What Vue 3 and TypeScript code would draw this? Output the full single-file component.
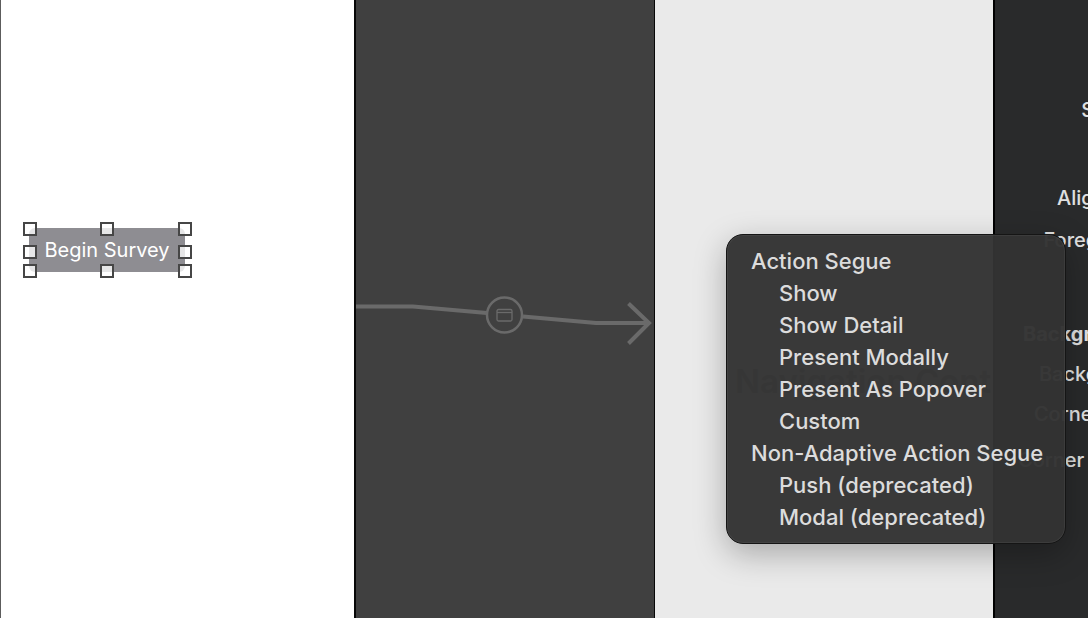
<script setup lang="ts">
interface MenuGroup {
  title: string
  items: string[]
}

const groups: MenuGroup[] = [
  {
    title: 'Action Segue',
    items: ['Show', 'Show Detail', 'Present Modally', 'Present As Popover', 'Custom'],
  },
  {
    title: 'Non-Adaptive Action Segue',
    items: ['Push (deprecated)', 'Modal (deprecated)'],
  },
]

const handles: string[] = [
  'top left', 'top center', 'top right',
  'middle left', 'middle right',
  'bottom left', 'bottom center', 'bottom right',
]
</script>

<template>
  <main class="editor">
    <section class="scene">
      <div class="selection">
        <button class="survey" type="button">Begin Survey</button>
        <i v-for="handle in handles" :key="handle" class="handle" :class="handle"></i>
      </div>
    </section>

    <section class="gap">
      <svg class="segue" viewBox="0 0 298 44" fill="none" stroke="#6a6a6a" aria-hidden="true">
        <path d="M0 4.500H57L131 11M167 14.500L240 21H293" stroke-width="4" />
        <path d="M272.500 1.500L293 21L272.500 41.500" stroke-width="4" />
        <circle cx="148.500" cy="13" r="17.500" stroke-width="2.500" />
        <rect x="141" y="7.500" width="15" height="11.500" rx="1.500" stroke-width="1.300" />
        <path d="M141 10.500H156" stroke-width="1.300" />
      </svg>
    </section>

    <section class="controller">
      <h1 class="controller-title">Navigation Controller</h1>
    </section>

    <aside class="inspector">
      <div class="labels">
        <span class="label subtitle">Subtitle</span>
        <span class="label">Alignment</span>
        <span class="label foreground">Foreground</span>
        <h2 class="heading">Background</h2>
        <span class="label">Background</span>
        <span class="label">Corner Style</span>
        <span class="label radius">Corner Radius</span>
      </div>
    </aside>

    <div class="menu" role="menu">
      <div v-for="group in groups" :key="group.title" role="group" :aria-label="group.title">
        <div class="group-title">{{ group.title }}</div>
        <button v-for="item in group.items" :key="item" class="item" type="button" role="menuitem">
          {{ item }}
        </button>
      </div>
    </div>
  </main>
</template>

<style>
body {
  margin: 0;
  background: #404040;
}
</style>

<style scoped>
.editor {
  position: relative;
  display: grid;
  grid-template-columns: 356fr 299fr 338fr 95fr;
  min-height: 100vh;
  overflow: hidden;
  font-family: Inter, "Liberation Sans", sans-serif;
}

.editor *,
.editor {
  box-sizing: border-box;
}

.scene {
  position: relative;
  background: #fff;
  border-left: 1px solid #5c5c5c;
  border-right: 2px solid #080808;
}

.selection {
  position: absolute;
  top: 228px;
  left: 28px;
}

.survey {
  display: block;
  width: 156px;
  height: 44px;
  padding: 0;
  border: 0;
  border-radius: 6px;
  background: #8e8d92;
  color: #fff;
  font: 400 20px/44px Inter, "Liberation Sans", sans-serif;
  white-space: nowrap;
}

.handle {
  position: absolute;
  width: 14px;
  height: 14px;
  border: 2px solid #464646;
  background: rgba(255, 255, 255, 0.78);
}

.top { top: -6px; }
.middle { top: 17px; }
.bottom { bottom: -6px; }
.left { left: -6px; }
.center { left: 71px; }
.right { right: -7px; }

.gap {
  position: relative;
  background: #404040;
  border-right: 1px solid #080808;
}

.segue {
  position: absolute;
  top: 302px;
  left: 0;
  width: 100%;
  overflow: visible;
}

.controller {
  overflow: hidden;
  padding: 362px 0 0 80px;
  background: #eaeaea;
}

.controller-title {
  margin: 0;
  color: #999;
  font-size: 33px;
  font-weight: 600;
  line-height: 38px;
  white-space: nowrap;
}

.inspector {
  overflow: hidden;
  border-left: 2px solid #000;
  background: #292a2b;
}

.labels {
  display: flex;
  flex-direction: column;
  align-items: flex-end;
  width: 159px;
  padding-top: 98px;
  color: #e0e0e0;
  font-size: 20px;
  font-weight: 500;
  line-height: 24px;
  white-space: nowrap;
}

.label {
  margin-bottom: 16px;
}

.label.subtitle {
  margin-bottom: 64px;
}

.label.foreground {
  margin: 2px 0 70px;
}

.heading {
  align-self: flex-start;
  margin: 0 0 16px 28px;
  font-size: 20px;
  font-weight: 700;
}

.label.radius {
  margin-top: 6px;
}

.menu {
  position: absolute;
  top: 234px;
  left: 726px;
  padding: 10px 22px 10px 24px;
  border: 1px solid #151515;
  border-radius: 17px;
  background: rgba(51, 51, 51, 0.97);
  box-shadow: inset 0 0 0 1px rgba(255, 255, 255, 0.05), 0 10px 32px rgba(0, 0, 0, 0.28);
  color: #dcdcdc;
  font-size: 22px;
  font-weight: 500;
  line-height: 32px;
  white-space: nowrap;
}

.item {
  display: block;
  width: 100%;
  padding: 0 0 0 28px;
  border: 0;
  background: none;
  color: inherit;
  font: inherit;
  text-align: left;
}
</style>
